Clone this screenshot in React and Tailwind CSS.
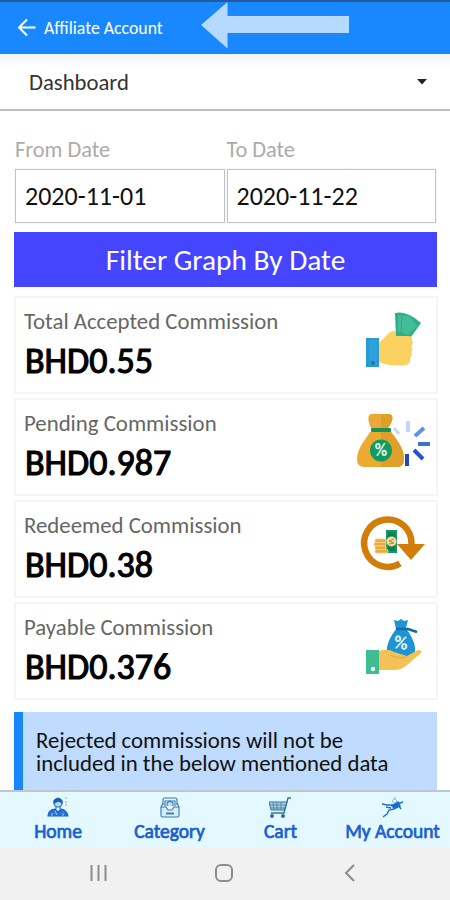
import React from 'react';

const HandCashIcon = () => (
  <svg width="110" height="98" viewBox="0 0 110 98" fill="none">
    <path d="M55 17 Q67 14 81 27 L71 41 L56 41 Z" fill="#2fae8a" />
    <path d="M58 19 L70 20 L77 30 L68 39 L58 35 Z" fill="#43bd98" />
    <path d="M62 18 L61 39" stroke="#36a684" strokeWidth="1" />
    <path
      d="M38 48 Q43 43 47 39 Q52 34 56 35 V40 H68 Q73 40 72 44 Q74 47 71 50 Q74 53 71 56 Q73 59 70 62 Q71 68 66 69 Q52 71 38 66 Z"
      fill="#fbd15f"
    />
    <path d="M69 49 H72 M68 56 H71 M67 62 H70" stroke="#f3c455" strokeWidth="1" />
    <rect x="26" y="42" width="13" height="29" fill="#269bd8" />
    <rect x="29" y="44" width="8" height="25" fill="#2ea0da" />
    <circle cx="33" cy="67" r="1.8" fill="#176da8" />
  </svg>
);

const PendingBagIcon = () => (
  <svg width="110" height="98" viewBox="0 0 110 98" fill="none">
    <path d="M31 30 C27 22 28 17 31 16 H50 C54 18 53 23 48 30 Z" fill="#eda83a" />
    <path d="M30 34 H51 C57 42 64 50 64 61 Q64 69 57 69 H24 Q17 69 17 61 C17 51 25 42 30 34 Z" fill="#edaa31" />
    <path d="M41 16 H50 C54 18 53 23 48 30 L51 34 C57 42 64 50 64 61 Q64 69 57 69 H41 Z" fill="#dfa02a" />
    <rect x="31" y="30" width="20" height="4" rx="1" fill="#15935b" />
    <circle cx="41" cy="52.5" r="11" fill="#109c61" />
    <text x="41" y="58" textAnchor="middle" fontSize="17" fontWeight="700" fill="#e8f5ee">%</text>
    <path d="M54 30 L59 36" stroke="#ccdaf5" strokeWidth="3.5" />
    <path d="M68 23 V34" stroke="#c4d5f6" strokeWidth="4" />
    <path d="M75 38 L84 30" stroke="#638fe9" strokeWidth="4" />
    <path d="M78 46 H90" stroke="#3e70d8" strokeWidth="4" />
    <path d="M74 52 L83 61" stroke="#2855c2" strokeWidth="4" />
    <path d="M67 56 V68" stroke="#2149b6" strokeWidth="4" />
  </svg>
);

const RedeemIcon = () => (
  <svg width="110" height="98" viewBox="0 0 110 98" fill="none">
    <path d="M60 63.5 A23.7 23.7 0 1 1 71.5 44" stroke="#d17d08" strokeWidth="6.5" />
    <path d="M57 44 H85 L71 60 Z" fill="#d17d08" />
    <rect x="46" y="30" width="11" height="23" fill="#149762" />
    <rect x="48" y="32" width="7" height="19" fill="#0a8054" />
    <circle cx="51.5" cy="41.5" r="5" fill="#f5dca1" />
    <path d="M54 39 L49 41 L54 43 L49 44" stroke="#bd8439" strokeWidth="1" />
    <g fill="#eba93d" stroke="#f7d187" strokeWidth="1">
      <rect x="35" y="39" width="11" height="3.5" rx="1.5" />
      <rect x="34" y="42.5" width="12" height="3.5" rx="1.5" />
      <rect x="35" y="46" width="11" height="3.5" rx="1.5" />
      <rect x="35" y="49.5" width="13" height="3.5" rx="1.5" />
    </g>
  </svg>
);

const PayableIcon = () => (
  <svg width="110" height="98" viewBox="0 0 110 98" fill="none">
    <path d="M54 18 L58 19 L61 17 L64 19 L68 18 L66 26 C71 34 76 41 75 50 L69 54 H47 C45 42 52 33 56 27 Z" fill="#1e94d2" />
    <path d="M56 27 H68 L77 30" stroke="#146b9f" strokeWidth="2.5" />
    <text x="61" y="47" textAnchor="middle" fontSize="19" fontWeight="700" fill="#e9f7ff" transform="rotate(8 61 41)">%</text>
    <path d="M39 49 Q48 46 54 50 L67 54 L78 48 Q83 48 81 51 L66 64 Q61 68 54 68 H39 Z" fill="#f2c158" />
    <path d="M50 53 Q58 57 67 55" stroke="#e2b04f" strokeWidth="1.5" />
    <rect x="26" y="48" width="13" height="24" fill="#3dbd91" />
    <circle cx="33" cy="67" r="2.2" fill="#e8fff5" />
  </svg>
);

const HomeIcon = () => (
  <svg width="24" height="22" viewBox="0 0 24 22" fill="none" stroke="#1764b8" strokeWidth="1.1">
    <circle cx="12" cy="6" r="4" fill="#b5dcf5" />
    <path d="M8 6 V3.5 Q12 -1.5 16 3.5 V6 L13 4 Z" fill="#185fb9" />
    <path d="M10 10 V12 M14 10 V12" />
    <path d="M2 19 Q2 13 9 12 L12 15 L15 12 Q21 13 22 19 Z" fill="#2873d5" />
    <path d="M6 16 V19 M9 14 L11 18 M17 16 V19" stroke="#93c2ed" />
    <path d="M19 1 H21 M20 4 V6 M19 8 H21" stroke="#7dafda" />
  </svg>
);

const CategoryIcon = () => (
  <svg width="24" height="22" viewBox="0 0 24 22" fill="none" stroke="#3777af" strokeWidth="1.1">
    <path d="M5 8 V3 Q5 1 7 1 H17 Q19 1 19 3 V8 M7 9 V4 H17 V9" />
    <path d="M9 9 V6 L12 4 L15 6 V9" fill="#bddff2" />
    <path d="M3 10 L5 6 M21 10 L19 6 M3 10 H8 L10 13 H14 L16 10 H21 V18.5 Q21 20 19.5 20 H4.5 Q3 20 3 18.5 Z" fill="#d5f0fb" />
    <path d="M8 16.5 H16" strokeWidth="1.8" />
  </svg>
);

const CartIcon = () => (
  <svg width="24" height="22" viewBox="0 0 24 22" fill="none" stroke="#33739f" strokeWidth="1.4">
    <path d="M22 1 H19 L15 16 H2" />
    <path d="M0 5 H18 L15 13 H2 Z" fill="#a8d0e4" strokeWidth="1" />
    <path d="M4 5 L5 13 M8 5 V13 M12 5 V13 M1 8 H17 M2 11 H16" strokeWidth=".7" />
    <circle cx="3" cy="19" r="1.3" fill="#255e96" />
    <circle cx="14" cy="19" r="1.3" fill="#255e96" />
  </svg>
);

const AccountIcon = () => (
  <svg width="24" height="22" viewBox="0 0 24 22" fill="none" stroke="#1c6fc9" strokeWidth="1.4">
    <path d="M1 7 L6 8 L11 8 L16 7 L22 5 M10 8 L13 11 L18 9 L20 12" />
    <path d="M12 8 L17 5 L19 9 L13 12 Z" fill="#1766d4" />
    <path d="M13 12 L8 13 L6 17 L2 20 M5 10 L10 11" />
    <circle cx="13.5" cy="4" r="2" stroke="#8abbd7" strokeWidth="1" />
    <path d="M14 0 V2" stroke="#91aeb9" strokeWidth="1" />
  </svg>
);

const cards = [
  { label: 'Total Accepted Commission', value: 'BHD0.55', Icon: HandCashIcon },
  { label: 'Pending Commission', value: 'BHD0.987', Icon: PendingBagIcon },
  { label: 'Redeemed Commission', value: 'BHD0.38', Icon: RedeemIcon },
  { label: 'Payable Commission', value: 'BHD0.376', Icon: PayableIcon },
];

const navItems = [
  { label: 'Home', Icon: HomeIcon, width: 'w-[116px]' },
  { label: 'Category', Icon: CategoryIcon, width: 'w-[107px]' },
  { label: 'Cart', Icon: CartIcon, width: 'w-[115px]' },
  { label: 'My Account', Icon: AccountIcon, width: 'w-[109px]' },
];

const Header = () => (
  <header className="flex h-[54px] shrink-0 border-t-2 border-[#2459a0] bg-[#1988fe] pl-[17px] text-white">
    <svg className="mt-4 shrink-0" width="20" height="20" viewBox="0 0 20 20" fill="none" stroke="currentColor" strokeWidth="2">
      <path d="M18.5 9.5 H2.5 M10 1.5 L2 9.5 L10 17.5" />
    </svg>
    <h1 className="ml-[7px] mt-4 w-[157px] whitespace-nowrap text-[17.8px] leading-5">Affiliate Account</h1>
    <svg width="148" height="48" viewBox="0 0 148 48">
      <path d="M0 23 L26.5 0 V14 H148 V31 H26.5 V46.5 Z" fill="#b6d9ff" />
    </svg>
  </header>
);

const DateField = ({ label, value }) => (
  <div className="w-[210px]">
    <label className="block h-[31px] text-[22.4px] leading-6 text-[#ababab]">{label}</label>
    <div className="h-[54px] border-[1.5px] border-[#c2c2c2] pl-[9px] text-[26px] leading-[52px] text-[#111] shadow-[0_0_1px_#ccc]">
      {value}
    </div>
  </div>
);

const CommissionCard = ({ label, value, Icon }) => (
  <div className="flex h-[98px] justify-between overflow-hidden border-2 border-[#f5f5f5] pl-2">
    <div className="whitespace-nowrap pt-[11px]">
      <p className="text-[22.8px] leading-6 text-[#666]">{label}</p>
      <p className="mt-[7px] pl-px text-[36px] leading-[42px] text-black [-webkit-text-stroke:1.1px_black]">{value}</p>
    </div>
    <div className="-mr-[14px] -mt-[2px] shrink-0">
      <Icon />
    </div>
  </div>
);

const App = () => {
  return (
    <div className="flex h-[900px] w-[450px] flex-col overflow-hidden bg-white font-[Carlito,Lato,sans-serif]">
      <Header />
      <div className="flex h-[57px] shrink-0 items-center justify-between border-b-2 border-[#bdbdbd] bg-linear-to-b from-[#f4f3f3] via-white via-25% to-white pl-[29px] pr-[23px]">
        <span className="text-[22.7px] leading-6 text-[#333]">Dashboard</span>
        <svg width="10" height="6" viewBox="0 0 10 6">
          <path d="M0 0 H10 L5 5.5 Z" fill="#222" />
        </svg>
      </div>
      <main className="min-h-0 flex-1 overflow-hidden px-[14px] pt-[27px]">
        <div className="flex gap-[2px] pl-px">
          <DateField label="From Date" value="2020-11-01" />
          <DateField label="To Date" value="2020-11-22" />
        </div>
        <button className="mt-[9px] block h-[55px] w-[423px] bg-[#4545ff] text-[29.4px] leading-[56px] text-white">
          Filter Graph By Date
        </button>
        <div className="mt-[9px] flex w-[424px] flex-col gap-1">
          {cards.map((card) => (
            <CommissionCard key={card.label} {...card} />
          ))}
        </div>
        <p className="mt-3 h-[90px] w-[423px] whitespace-nowrap border-l-[9px] border-[#1688fc] bg-[#bfdbff] pl-[13px] pt-[17px] text-[22.8px] leading-[23px] text-[#111]">
          Rejected commissions will not be
          <br />
          included in the below mentioned data
        </p>
      </main>
      <nav className="flex h-[58px] shrink-0 border-t-2 border-[#bfc6ca] bg-[#e4f9ff]">
        {navItems.map(({ label, Icon, width }) => (
          <a key={label} className={`flex shrink-0 flex-col items-center pt-[5px] text-[#1760d2] ${width}`}>
            <Icon />
            <span className="mt-px whitespace-nowrap text-[19.5px] leading-[22px] [-webkit-text-stroke:0.7px_#1760d2]">{label}</span>
          </a>
        ))}
      </nav>
      <footer className="flex h-[52px] shrink-0 items-center bg-[#f1f1f1] text-[#8c8c8c]">
        <svg width="450" height="52" viewBox="0 0 450 52" fill="none" stroke="currentColor" strokeWidth="2">
          <path d="M91.5 17 V33 M98.5 17 V33 M105.5 17 V33" />
          <rect x="216" y="17" width="16" height="16" rx="5" />
          <path d="M354 17 L346 25 L354 33" />
        </svg>
      </footer>
    </div>
  );
};

export default App;
